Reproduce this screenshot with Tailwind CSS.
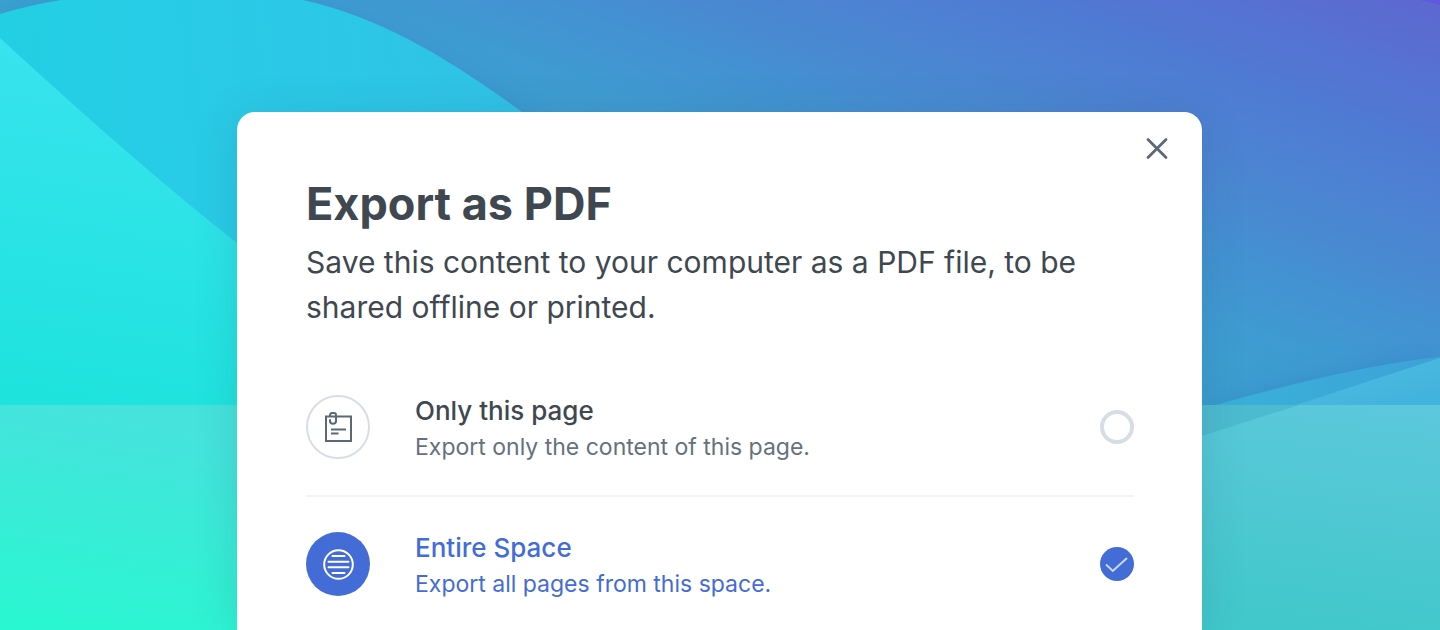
<!DOCTYPE html>
<html lang="en">
<head>
<meta charset="utf-8">
<meta name="viewport" content="width=device-width, initial-scale=1">
<title>Export as PDF</title>
<script src="https://cdn.jsdelivr.net/npm/@tailwindcss/browser@4"></script>
</head>
<body class="relative isolate min-h-screen bg-[#4a88d2] font-['Inter',sans-serif] text-[#3f4850]">
<!-- Layered wave backdrop -->
<svg class="absolute inset-0 -z-10 size-full" viewBox="0 0 1440 630" preserveAspectRatio="none" aria-hidden="true">
  <defs>
    <linearGradient id="sky" gradientUnits="userSpaceOnUse" x1="632" y1="237" x2="808" y2="-237">
      <stop offset="0" stop-color="#3aa2d0"/><stop offset=".25" stop-color="#3f9bd1"/><stop offset=".36" stop-color="#4293d1"/><stop offset=".5" stop-color="#4a88d2"/><stop offset=".74" stop-color="#5079d3"/><stop offset="1" stop-color="#5e67d0"/>
    </linearGradient>
    <linearGradient id="hill" gradientUnits="userSpaceOnUse" x1="0" y1="100" x2="500" y2="60">
      <stop offset="0" stop-color="#22cfe3"/><stop offset=".5" stop-color="#2acae7"/><stop offset="1" stop-color="#30c2e6"/>
    </linearGradient>
    <linearGradient id="slope" gradientUnits="userSpaceOnUse" x1="60" y1="60" x2="0" y2="405">
      <stop offset="0" stop-color="#37e3ee"/><stop offset="1" stop-color="#1de3dc"/>
    </linearGradient>
    <linearGradient id="shoreL" gradientUnits="userSpaceOnUse" x1="40" y1="405" x2="0" y2="630">
      <stop offset="0" stop-color="#45e3dc"/><stop offset="1" stop-color="#28f7d0"/>
    </linearGradient>
    <linearGradient id="shoreR" gradientUnits="userSpaceOnUse" x1="1340" y1="405" x2="1310" y2="630">
      <stop offset="0" stop-color="#5bc8db"/><stop offset="1" stop-color="#41c8ca"/>
    </linearGradient>
    <linearGradient id="waveBack" gradientUnits="userSpaceOnUse" x1="1202" y1="409" x2="1440" y2="357">
      <stop offset="0" stop-color="#38b2d8"/><stop offset="1" stop-color="#3ea2d8"/>
    </linearGradient>
    <linearGradient id="waveFront" gradientUnits="userSpaceOnUse" x1="1380" y1="370" x2="1390" y2="405">
      <stop offset="0" stop-color="#4ab9e0"/><stop offset="1" stop-color="#42b3dd"/>
    </linearGradient>
    <filter id="soft" x="-20%" y="-20%" width="140%" height="140%"><feGaussianBlur stdDeviation="14"/></filter>
  </defs>
  <rect width="1440" height="630" fill="url(#sky)"/>
  <path d="M1420 0L1440 5V0Z" fill="#6159dc"/>
  <path d="M1202 409Q1352 365 1440 357V420H1202Z" fill="#2d7cc0" opacity=".5" filter="url(#soft)"/>
  <path d="M0 14C90 -16 180 -22 303 0C380 19 450 63 522 112L522 420H0Z" fill="#3180c4" opacity=".35" filter="url(#soft)"/>
  <path d="M0 14Q30 5 61 0C140 -20 220 -18 303 0C380 17 450 59 522 112L522 420H0Z" fill="url(#hill)"/>
  <path d="M0 38Q140 167 237 243L400 360V405H0Z" fill="url(#slope)"/>
  <path d="M1180 415Q1352 365 1440 357V420H1180Z" fill="url(#waveBack)"/>
  <path d="M1180 443L1440 358V440Z" fill="url(#waveFront)"/>
  <rect y="405" width="700" height="225" fill="url(#shoreL)"/>
  <rect x="700" y="405" width="740" height="225" fill="url(#shoreR)"/>
  <path d="M1180 405H1299L1180 443Z" fill="#4cbbd0"/>
</svg>

<main class="pt-28 pr-px">
  <section role="dialog" aria-labelledby="dialog-title" class="relative mx-auto w-full max-w-[965px] rounded-t-[18px] bg-white pt-16 pr-[68px] pl-[69px] shadow-[0_4px_44px_rgba(40,60,90,0.15)]">
    <button type="button" aria-label="Close" class="absolute top-5 right-[29px] grid size-8 place-items-center text-[#5c6975]">
      <svg class="size-6" viewBox="0 0 24 24" fill="none" stroke="currentColor" stroke-width="2.8" stroke-linecap="round" aria-hidden="true"><path d="M3 3.5L21 21.5M21 3.5L3 21.5"/></svg>
    </button>
    <h1 id="dialog-title" class="text-[45px] leading-14 font-bold">Export as PDF</h1>
    <p class="mt-2 text-[30px] leading-[45px]">Save this content to your computer as a PDF file, to be shared offline or printed.</p>

    <form class="mt-[29px]">
      <label for="only-page" class="flex h-[138px] items-center border-b-2 border-[#f3f4f6]">
        <span class="grid size-16 shrink-0 place-items-center rounded-full border-2 border-[#d8dee6] text-[#5c6975]">
          <svg class="size-8" viewBox="0 0 32 32" fill="none" stroke="currentColor" stroke-width="2" aria-hidden="true"><path d="M4 5.500H29V30H4Z"/><path d="M8 4.500Q8 2 10 2H12Q14 2 14 4.200V10Q14 12.800 11 12.800Q8 12.800 8 10V9" stroke-linecap="round"/><path d="M9 18.500H24M9 22.500H16.500"/></svg>
        </span>
        <span class="ml-[45px] flex-1 pt-1">
          <span class="block text-[26px] leading-9 font-medium">Only this page</span>
          <span class="block text-[23px] leading-9 text-[#65717e]">Export only the content of this page.</span>
        </span>
        <input id="only-page" name="scope" type="radio" class="size-[34px] appearance-none rounded-full border-4 border-[#d7dde5] bg-white">
      </label>
      <label for="entire-space" class="flex h-[133px] items-center text-[#446cd6]">
        <span class="grid size-16 shrink-0 place-items-center rounded-full bg-[#446cd6] text-white">
          <svg class="size-8" viewBox="0 0 32 32" fill="none" stroke="currentColor" stroke-width="2" stroke-linecap="round" aria-hidden="true"><circle cx="16.500" cy="16.500" r="14.300"/><path d="M10.500 8H22.500M6.500 13.800H26.500M6.500 19.300H26.500M10.500 25H22.500"/></svg>
        </span>
        <span class="ml-[45px] flex-1 pt-1">
          <span class="block text-[26px] leading-9 font-medium">Entire Space</span>
          <span class="block text-[23px] leading-9">Export all pages from this space.</span>
        </span>
        <span class="relative size-[34px]">
          <input id="entire-space" name="scope" type="radio" checked class="block size-[34px] appearance-none rounded-full bg-[#446cd6]">
          <svg class="pointer-events-none absolute inset-0" viewBox="0 0 34 34" fill="none" stroke="#cbd7ee" stroke-width="2" aria-hidden="true"><path d="M6 17.500L12.800 24L27 11"/></svg>
        </span>
      </label>
    </form>
  </section>
</main>
</body>
</html>
